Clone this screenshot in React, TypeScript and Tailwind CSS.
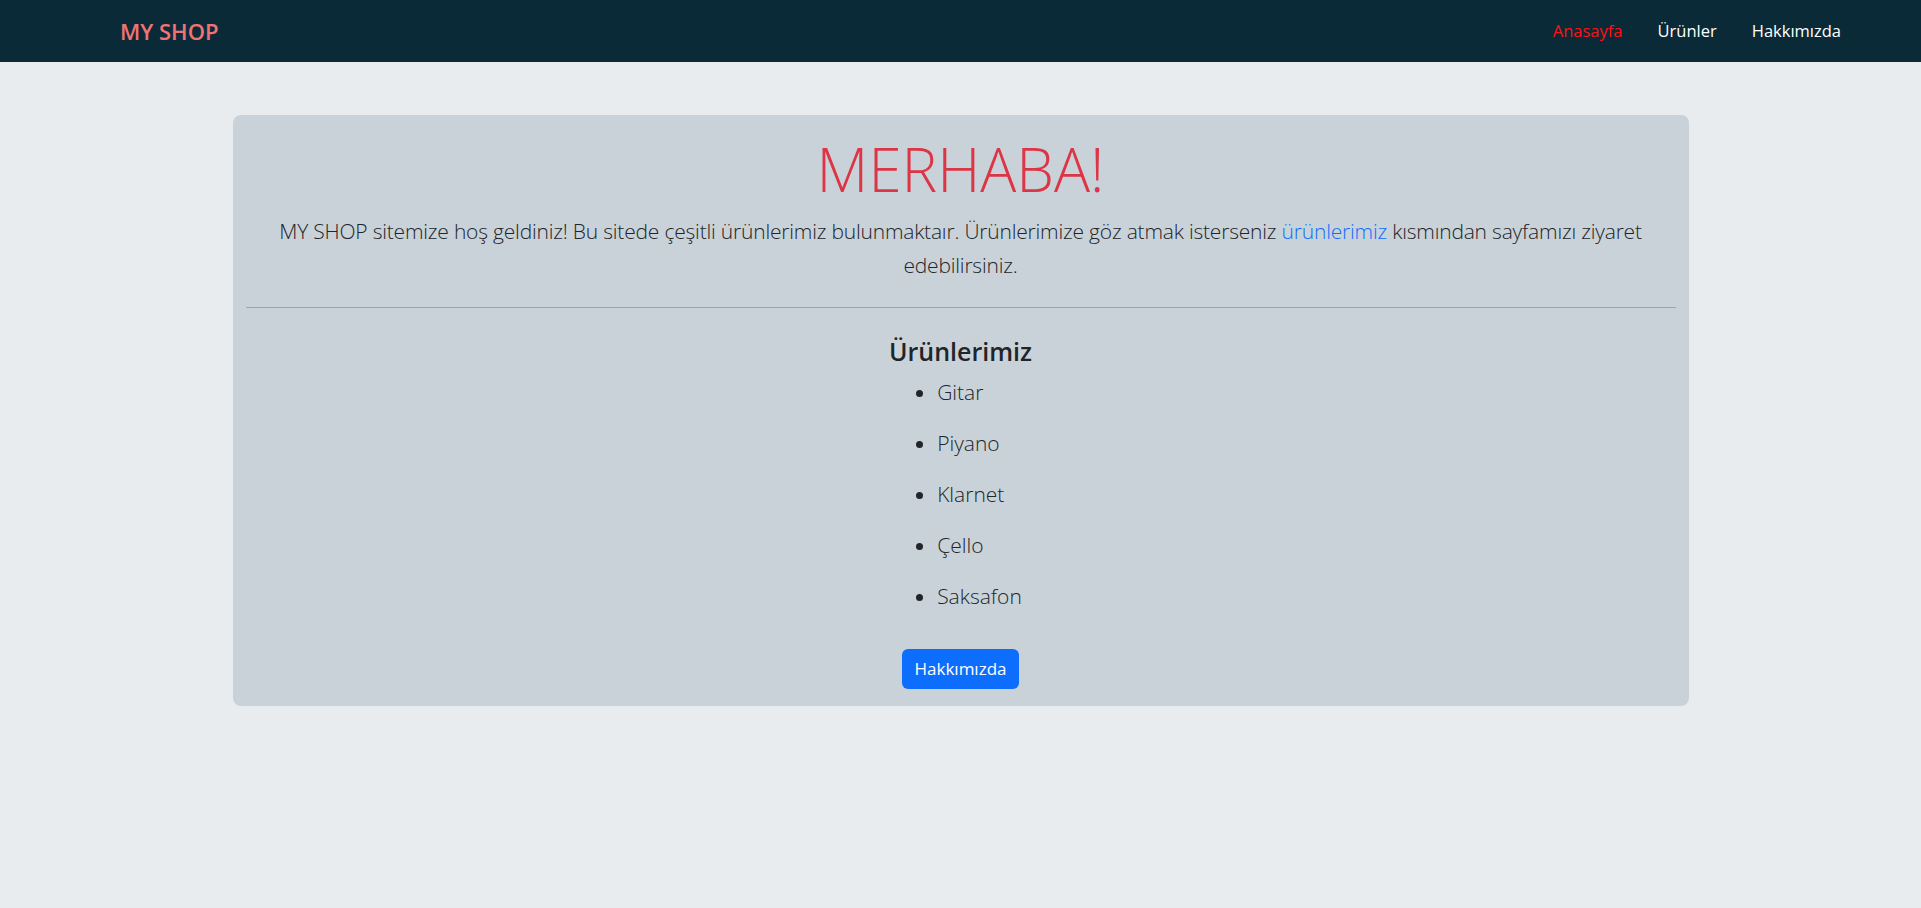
const products = ['Gitar', 'Piyano', 'Klarnet', 'Çello', 'Saksafon'];

export default function App() {
  return (
    <div className="min-h-screen bg-[#e8ecef] font-['Open_Sans',sans-serif] text-[#212529]">
      <nav className="h-[62px] bg-[#0a2a38] flex items-center justify-between pl-[120px] pr-[80px]">
        <a href="#" className="text-[22px] font-semibold text-[#f07373]">MY SHOP</a>
        <ul className="flex items-center gap-[35px] text-[16.5px]">
          <li><a href="#" className="text-[#ff1010]">Anasayfa</a></li>
          <li><a href="#" className="text-white">Ürünler</a></li>
          <li><a href="#" className="text-white">Hakkımızda</a></li>
        </ul>
      </nav>

      <div className="w-[1456px] mx-auto mt-[53px] bg-[#cad2d9] rounded-lg px-[13px] pt-[17px] pb-[17px] text-center">
        <h1 className="text-[60px] leading-[74px] font-light text-[#dc3545] mb-[8px]">MERHABA!</h1>
        <p className="text-[21px] leading-[34px] font-light tracking-[-0.2px]">
          MY SHOP sitemize hoş geldiniz! Bu sitede çeşitli ürünlerimiz bulunmaktaır. Ürünlerimize göz atmak isterseniz{' '}
          <a href="#" className="text-[#0d6efd]">ürünlerimiz</a> kısmından sayfamızı ziyaret edebilirsiniz.
        </p>
        <hr className="mt-[25px] border-0 border-t border-[#9ca5ad]" />

        <div className="flex flex-col items-center">
          <h4 className="mt-[27px] text-[25px] leading-[32px] font-semibold">Ürünlerimiz</h4>
          <ul className="mt-[9px] list-disc pl-[38px] text-left text-[21px] leading-[33px] font-light space-y-[18px]">
            {products.map((p) => (
              <li key={p}>{p}</li>
            ))}
          </ul>
          <button className="mt-[36px] bg-[#0d6efd] text-white text-[17px] leading-[26px] px-[13px] py-[7px] rounded-[6px]">
            Hakkımızda
          </button>
        </div>
      </div>
    </div>
  );
}
